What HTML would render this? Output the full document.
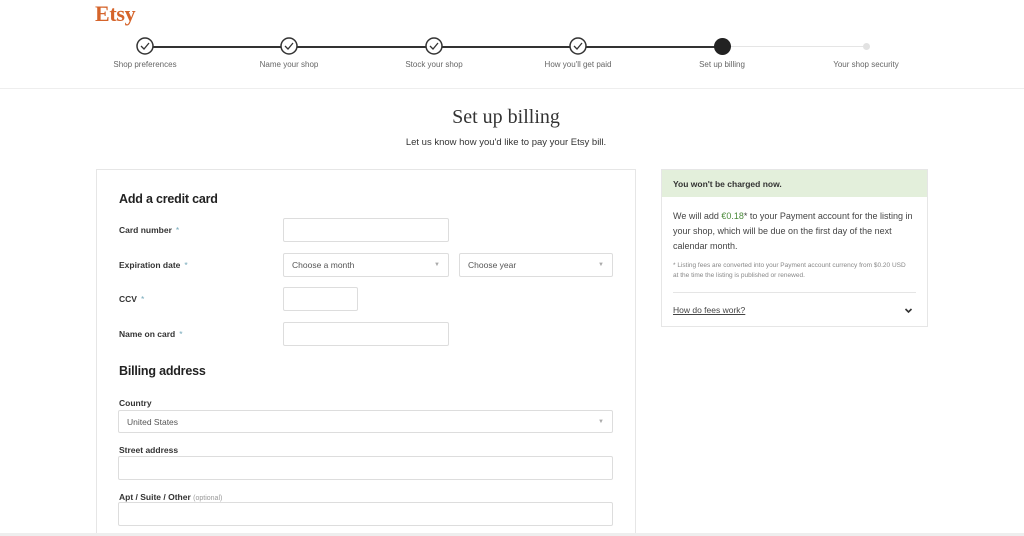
<!DOCTYPE html>
<html><head><style>
*{margin:0;padding:0;box-sizing:border-box}
html,body{width:1024px;height:536px;overflow:hidden}
body{background:#fff;font-family:"Liberation Sans",sans-serif;color:#222;position:relative}
.a{position:absolute}
.hdr{left:0;top:0;width:1024px;height:89px;background:#fff;border-bottom:1px solid #eee}
.lbl{font-size:8px;color:#666;width:120px;text-align:center;top:60px}
.f{font-size:8.5px;font-weight:bold;color:#333}
.f i{color:#7ab;font-style:normal;font-weight:normal;margin-left:4px}
.in{background:#fff;border:1px solid #ddd;border-radius:2px;font-size:8.5px;color:#555;padding-left:8px;line-height:22px}
.in b{position:absolute;right:8px;top:0;font-size:6px;color:#aaa;font-weight:normal}
</style></head><body>
<div class="a hdr"></div>
<div class="a" style="left:95px;top:1px;font-family:'Liberation Serif',serif;font-size:22px;color:#d5642b;font-weight:bold;letter-spacing:-0.3px">Etsy</div>
<div class="a" style="left:145px;top:46px;width:577px;height:2px;background:#333"></div>
<div class="a" style="left:722px;top:46px;width:144px;height:1px;background:#e5e5e5"></div>
<div class="a" style="left:863px;top:43px;width:7px;height:7px;border-radius:50%;background:#e2e2e2"></div>
<div class="a" style="left:714px;top:38px;width:17px;height:17px;border-radius:50%;background:#222"></div>
<svg class="a" style="left:0;top:0" width="1024" height="89">
<g fill="#fff" stroke="#333" stroke-width="1.5">
<circle cx="145" cy="46" r="8"/><circle cx="289" cy="46" r="8"/><circle cx="434" cy="46" r="8"/><circle cx="578" cy="46" r="8"/></g>
<g fill="none" stroke="#333" stroke-width="1.3">
<path d="M141 46l3 3 5-6"/><path d="M285 46l3 3 5-6"/><path d="M430 46l3 3 5-6"/><path d="M574 46l3 3 5-6"/></g>
</svg>
<div class="a lbl" style="left:85px">Shop preferences</div>
<div class="a lbl" style="left:229px">Name your shop</div>
<div class="a lbl" style="left:374px">Stock your shop</div>
<div class="a lbl" style="left:518px">How you'll get paid</div>
<div class="a lbl" style="left:662px">Set up billing</div>
<div class="a lbl" style="left:806px">Your shop security</div>
<div class="a" style="left:0;top:106px;width:1012px;text-align:center;font-family:'Liberation Serif',serif;font-size:20px;color:#333">Set up billing</div>
<div class="a" style="left:0;top:137px;width:1012px;text-align:center;font-size:9.5px;color:#333">Let us know how you'd like to pay your Etsy bill.</div>
<div class="a" style="left:96px;top:169px;width:540px;height:367px;background:#fff;border:1px solid #e6e6e6;border-bottom:none"></div>
<div class="a" style="left:119px;top:192px;font-size:12.5px;color:#222;font-weight:bold;letter-spacing:-0.2px">Add a credit card</div>
<div class="a f" style="left:119px;top:225px">Card number<i>*</i></div>
<div class="a f" style="left:119px;top:260px">Expiration date<i>*</i></div>
<div class="a f" style="left:119px;top:294px">CCV<i>*</i></div>
<div class="a f" style="left:119px;top:329px">Name on card<i>*</i></div>
<div class="a in" style="left:283px;top:218px;width:166px;height:24px"></div>
<div class="a in" style="left:283px;top:253px;width:166px;height:24px">Choose a month<b>▼</b></div>
<div class="a in" style="left:459px;top:253px;width:154px;height:24px">Choose year<b>▼</b></div>
<div class="a in" style="left:283px;top:287px;width:75px;height:24px"></div>
<div class="a in" style="left:283px;top:322px;width:166px;height:24px"></div>
<div class="a" style="left:119px;top:364px;font-size:12.5px;color:#222;font-weight:bold;letter-spacing:-0.2px">Billing address</div>
<div class="a f" style="left:119px;top:398px">Country</div>
<div class="a in" style="left:118px;top:410px;width:495px;height:23px">United States<b>▼</b></div>
<div class="a f" style="left:119px;top:445px">Street address</div>
<div class="a in" style="left:118px;top:456px;width:495px;height:24px"></div>
<div class="a f" style="left:119px;top:492px">Apt / Suite / Other <span style="font-weight:normal;color:#999;font-size:7px">(optional)</span></div>
<div class="a in" style="left:118px;top:502px;width:495px;height:24px"></div>
<div class="a" style="left:661px;top:169px;width:267px;height:158px;background:#fff;border:1px solid #e6e6e6"></div>
<div class="a" style="left:662px;top:170px;width:265px;height:27px;background:#e3efdb"></div>
<div class="a" style="left:673px;top:179px;font-size:8.5px;font-weight:bold;color:#333">You won't be charged now.</div>
<div class="a" style="left:673px;top:209px;width:250px;font-size:9px;line-height:15px;color:#444">We will add <span style="color:#4a8a3a">€0.18</span>* to your Payment account for the listing in your shop, which will be due on the first day of the next calendar month.</div>
<div class="a" style="left:673px;top:261px;width:235px;font-size:6.5px;line-height:10px;color:#888">* Listing fees are converted into your Payment account currency from $0.20 USD at the time the listing is published or renewed.</div>
<div class="a" style="left:673px;top:292px;width:243px;height:1px;background:#e5e5e5"></div>
<div class="a" style="left:673px;top:305px;font-size:8.5px;color:#444;text-decoration:underline">How do fees work?</div>
<svg class="a" style="left:904px;top:307px" width="9" height="7"><path d="M1.5 2l3 3 3-3" fill="none" stroke="#333" stroke-width="1.6"/></svg>
<div class="a" style="left:0;top:533px;width:1024px;height:3px;background:#eee"></div>
</body></html>
